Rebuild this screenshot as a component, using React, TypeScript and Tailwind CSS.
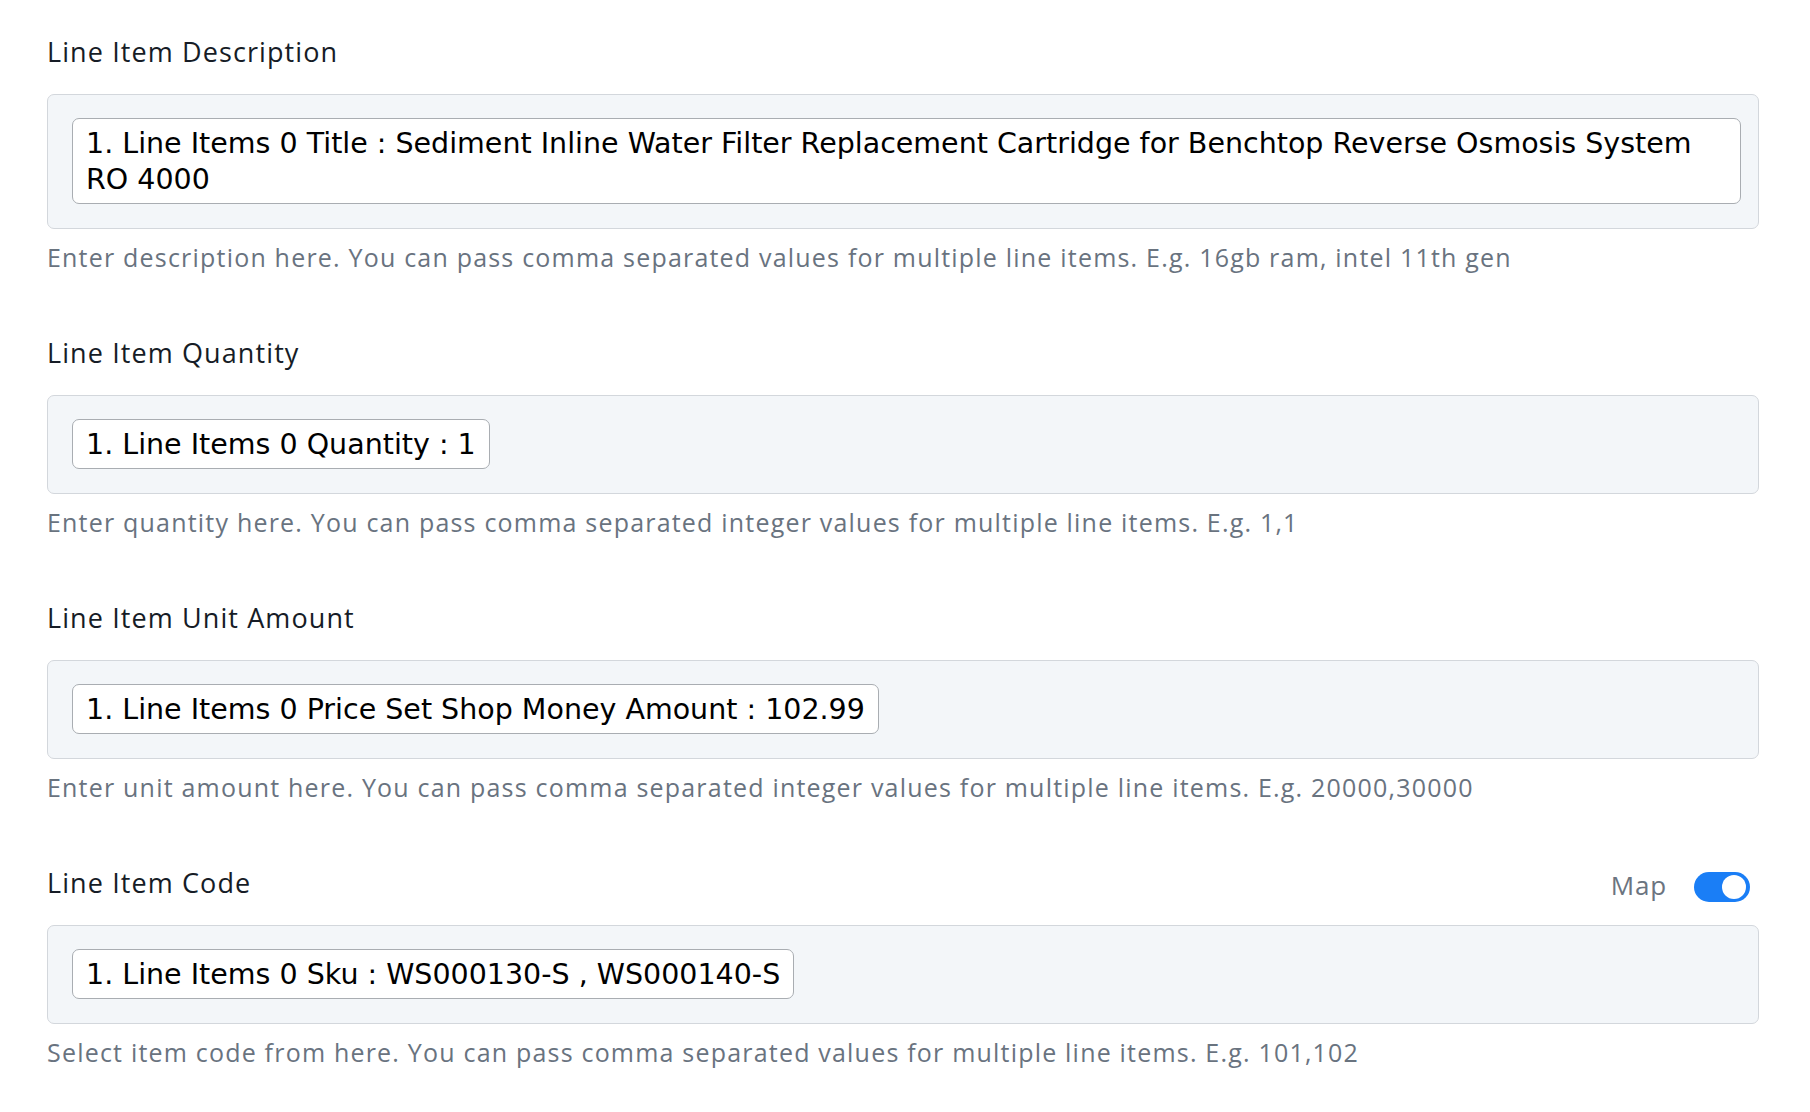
import { useState } from "react";

type Field = {
  id: string;
  label: string;
  value: string;
  help: string;
  mappable?: boolean;
};

const fields: Field[] = [
  {
    id: "description",
    label: "Line Item Description",
    value:
      "1. Line Items 0 Title : Sediment Inline Water Filter Replacement Cartridge for Benchtop Reverse Osmosis System RO 4000",
    help: "Enter description here. You can pass comma separated values for multiple line items. E.g. 16gb ram, intel 11th gen",
  },
  {
    id: "quantity",
    label: "Line Item Quantity",
    value: "1. Line Items 0 Quantity : 1",
    help: "Enter quantity here. You can pass comma separated integer values for multiple line items. E.g. 1,1",
  },
  {
    id: "unitAmount",
    label: "Line Item Unit Amount",
    value: "1. Line Items 0 Price Set Shop Money Amount : 102.99",
    help: "Enter unit amount here. You can pass comma separated integer values for multiple line items. E.g. 20000,30000",
  },
  {
    id: "code",
    label: "Line Item Code",
    value: "1. Line Items 0 Sku : WS000130-S , WS000140-S",
    help: "Select item code from here. You can pass comma separated values for multiple line items. E.g. 101,102",
    mappable: true,
  },
];

function Toggle({ on, onChange }: { on: boolean; onChange: (v: boolean) => void }) {
  return (
    <button
      type="button"
      onClick={() => onChange(!on)}
      className={`relative h-[30px] w-[56px] translate-y-[4px] rounded-full transition-colors ${
        on ? "bg-[#1a7ef6]" : "bg-[#c9ced6]"
      }`}
    >
      <span
        className={`absolute top-[3px] h-[24px] w-[24px] rounded-full bg-white transition-all ${
          on ? "left-[28px]" : "left-[4px]"
        }`}
      />
    </button>
  );
}

function FieldBlock({ field }: { field: Field }) {
  const [mapped, setMapped] = useState(true);

  return (
    <div className="mb-[62px]">
      <div className="mb-[25px] flex items-center justify-between">
        <label className="text-[27px] leading-[34px] tracking-[1.1px] text-[#161c26]">
          {field.label}
        </label>
        {field.mappable && (
          <div className="mr-[9px] flex items-center gap-[27px]">
            <span className="translate-y-[2px] text-[26px] leading-[34px] tracking-[0.8px] text-[#6b7480]">
              Map
            </span>
            <Toggle on={mapped} onChange={setMapped} />
          </div>
        )}
      </div>

      {/* mapped value box */}
      <div className="rounded-[7px] border-[1.5px] border-[#d3d7dc] bg-[#f3f6f9] pb-[24px] pl-[24px] pr-[17px] pt-[23px]">
        <span
          className="inline-block max-w-full rounded-[7px] border-[1.5px] border-[#a9adb2] bg-white px-[13px] pb-[5px] pt-[7px] text-[28.5px] leading-[36px] text-black"
          style={{ fontFamily: '"DejaVu Sans", Verdana, sans-serif' }}
        >
          {field.value}
        </span>
      </div>

      <p className="mt-[11px] text-[25px] leading-[34px] tracking-[1.2px] text-[#69737f]">
        {field.help}
      </p>
    </div>
  );
}

export default function App() {
  return (
    <div
      className="min-h-screen bg-white pl-[47px] pr-[51px] pt-[35px]"
      style={{ fontFamily: "'Open Sans', Lato, sans-serif" }}
    >
      {fields.map((f) => (
        <FieldBlock key={f.id} field={f} />
      ))}
    </div>
  );
}
